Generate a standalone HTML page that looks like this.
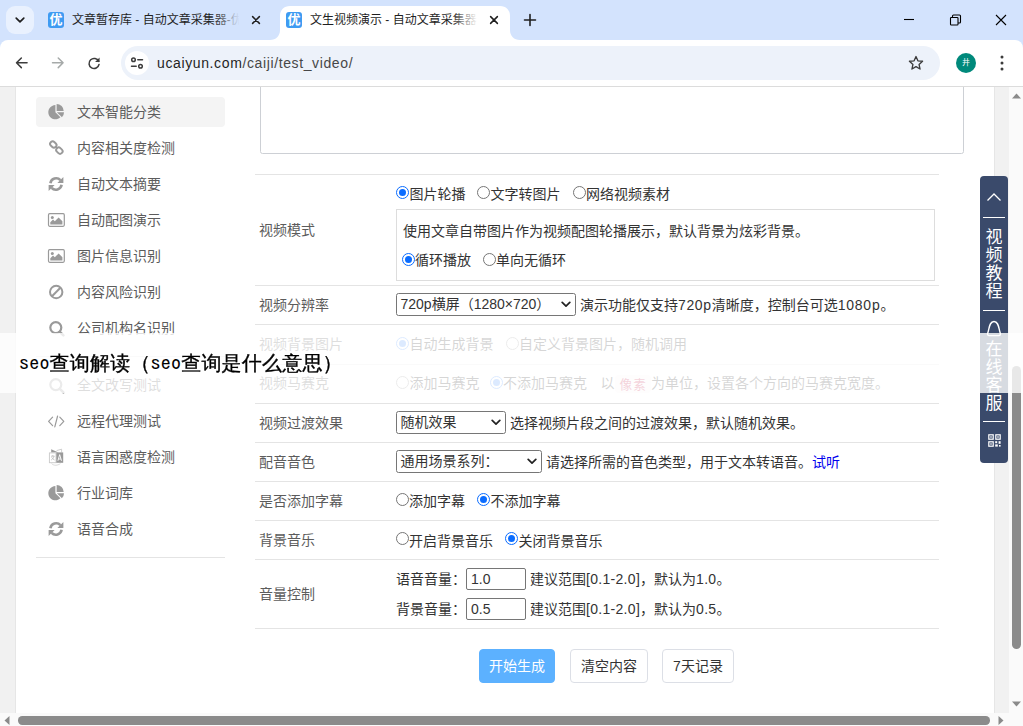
<!DOCTYPE html>
<html lang="zh-CN">
<head>
<meta charset="utf-8">
<title>文生视频演示 - 自动文章采集器</title>
<style>
*{box-sizing:border-box}
html,body{margin:0;padding:0}
body{width:1023px;height:726px;overflow:hidden;position:relative;background:#fff;font-family:"Liberation Sans","Noto Sans CJK SC",sans-serif;font-size:14px;color:#333}
.abs{position:absolute}
/* ---------- browser chrome ---------- */
#tabstrip{position:absolute;left:0;top:0;width:1023px;height:52px;background:#d3e3fd}
#toolbar{position:absolute;left:0;top:40px;width:1023px;height:46px;background:#fff;border-radius:8px 8px 0 0}
#tbline{position:absolute;left:0;top:86px;width:1023px;height:1px;background:#dcdcdc}
.tabtitle{position:absolute;top:11px;height:18px;line-height:18px;font-size:12px;color:#1f1f1f;white-space:nowrap;overflow:hidden}
.fav{position:absolute;top:12px;width:16px;height:16px;border-radius:3px;background:#3f9bf2;color:#fff;font-size:13px;line-height:16px;text-align:center;font-weight:bold;overflow:hidden}
#urlpill{position:absolute;left:121px;top:46px;width:819px;height:34px;border-radius:17px;background:#edf2fa}
#urltext{position:absolute;left:157px;top:52px;height:22px;line-height:22px;font-size:14px;color:#1f1f1f;white-space:nowrap;letter-spacing:.62px}
#urltext span{color:#474747}
/* ---------- page ---------- */
#page{position:absolute;left:0;top:87px;width:1009px;height:626px;background:#f1f1f1;overflow:hidden}
#card{position:absolute;left:15px;top:0;width:980px;height:626px;background:#fff;border-left:1px solid #e6e6e6;border-right:1px solid #e6e6e6}
.mi{position:absolute;left:36px;width:189px;height:30px;border-radius:4px;color:#5c5c5c;font-size:14px;line-height:30px}
.mi.act{background:#f4f4f4}
.mi b{position:absolute;left:41px;top:0;font-weight:normal;white-space:nowrap}
.mi svg{position:absolute;left:11px;top:6px;width:18px;height:18px;overflow:visible}
.hr{position:absolute;height:1px;background:#e4e4e4}
.lab{position:absolute;left:259px;height:20px;line-height:20px;color:#5c5c5c;white-space:nowrap}
.txt{position:absolute;height:20px;line-height:20px;color:#333;white-space:nowrap}
.rd{position:absolute;width:13px;height:13px;border-radius:50%;border:1px solid #767676;background:#fff}
.rd.on{border:1px solid #0a6cff}
.rd.on:after{content:"";position:absolute;left:2px;top:2px;width:7px;height:7px;border-radius:50%;background:#0a6cff}
.sel{position:absolute;height:23px;border:1px solid #767676;border-radius:2.5px;background:#fff;line-height:21px;padding-left:3.5px;color:#333;white-space:nowrap}
.sel svg{position:absolute;right:4px;top:6.5px;width:10px;height:7px}
.inp{position:absolute;width:60px;height:22px;border:1px solid #767676;border-radius:2px;background:#fff;line-height:20px;padding-left:4px;color:#333}
.btn{position:absolute;top:562px;height:34px;border:1px solid #dcdfe6;border-radius:4px;background:#fff;color:#333;line-height:32px;text-align:center;white-space:nowrap}
/* ---------- float bar ---------- */
#fbar{position:absolute;left:980px;top:176px;width:28px;height:287px;border-radius:4px;background:#3a4a6b;color:#fff}
#fbar .ln{position:absolute;left:3px;width:22px;height:1px;background:#fff}
#fbar .vt{position:absolute;left:0;width:28px;text-align:center;font-size:17px;line-height:18px}
/* ---------- scrollbars ---------- */
#vsb{position:absolute;left:1009px;top:87px;width:14px;height:626px;background:#fafafa}
#hsb{position:absolute;left:0;top:713px;width:1023px;height:13px;background:#fafafa}
/* ---------- overlay ---------- */
#ov{position:absolute;left:0;top:333px;width:1023px;height:60px;background:rgba(255,255,255,.8)}
#ovt{position:absolute;left:19px;top:346.5px;letter-spacing:.2px;height:30px;line-height:30px;font-size:20px;color:#000;white-space:nowrap;font-family:"Liberation Mono","WenQuanYi Zen Hei","Noto Sans CJK SC",sans-serif;-webkit-text-stroke:.35px #000}
#ovt i{font-style:normal;-webkit-text-stroke:.1px #000;font-family:"IPAGothic","Liberation Mono",monospace}
</style>
</head>
<body>
<!-- CHROME -->
<div id="tabstrip">
  <div class="abs" style="left:6px;top:6px;width:28px;height:28px;border-radius:9px;background:#e9f1fe"></div>
  <svg class="abs" style="left:13px;top:13px" width="14" height="14" viewBox="0 0 14 14"><path d="M3.2 5.2 L7 8.8 L10.8 5.2" fill="none" stroke="#1f1f1f" stroke-width="1.7" stroke-linecap="round" stroke-linejoin="round"/></svg>
  <!-- inactive tab -->
  <div class="fav" style="left:48px">优</div>
  <div class="tabtitle" style="left:72px;width:170px">文章暂存库 - 自动文章采集器-优采云</div>
  <div class="abs" style="left:214px;top:8px;width:30px;height:24px;background:linear-gradient(90deg,rgba(211,227,253,0),#d3e3fd 85%)"></div>
  <svg class="abs" style="left:250px;top:14px" width="12" height="12" viewBox="0 0 12 12"><path d="M2.6 2.6 L9.4 9.4 M9.4 2.6 L2.6 9.4" stroke="#1f1f1f" stroke-width="1.5" stroke-linecap="round"/></svg>
  <!-- active tab -->
  <svg class="abs" style="left:270px;top:6px" width="250" height="34" viewBox="0 0 250 34"><path d="M0 34 C6 34 10 30 10 24 L10 10 C10 4 14 0 20 0 L230 0 C236 0 240 4 240 10 L240 24 C240 30 244 34 250 34 Z" fill="#fff"/></svg>
  <div class="fav" style="left:286px">优</div>
  <div class="tabtitle" style="left:310px;width:170px">文生视频演示 - 自动文章采集器-优采云</div>
  <div class="abs" style="left:452px;top:8px;width:30px;height:24px;background:linear-gradient(90deg,rgba(255,255,255,0),#fff 85%)"></div>
  <svg class="abs" style="left:488px;top:14px" width="12" height="12" viewBox="0 0 12 12"><path d="M2.6 2.6 L9.4 9.4 M9.4 2.6 L2.6 9.4" stroke="#1f1f1f" stroke-width="1.5" stroke-linecap="round"/></svg>
  <!-- new tab -->
  <svg class="abs" style="left:523px;top:13px" width="14" height="14" viewBox="0 0 14 14"><path d="M7 1.5 V12.5 M1.5 7 H12.5" stroke="#1f1f1f" stroke-width="1.6" stroke-linecap="round"/></svg>
  <!-- window controls -->
  <svg class="abs" style="left:899px;top:10px" width="110" height="20" viewBox="0 0 110 20"><g fill="none" stroke="#000" stroke-width="1.1"><path d="M5 9.5 H15"/><rect x="51.5" y="7.5" width="7.5" height="7.5" rx=".8"/><path d="M53.5 7.5 V6 Q53.5 5 54.5 5 H60.5 Q61.5 5 61.5 6 V12 Q61.5 13 60.5 13 H59"/><path d="M97 5 L107 15 M107 5 L97 15"/></g></svg>
</div>
<div id="toolbar">
  <!-- back / forward / reload -->
  <svg class="abs" style="left:13.2px;top:14.2px" width="17.6" height="17.6" viewBox="0 0 20 20"><path d="M16 10 H4.5 M9.5 4.5 L4 10 L9.5 15.5" fill="none" stroke="#3c3c3c" stroke-width="1.7" stroke-linecap="round" stroke-linejoin="round"/></svg>
  <svg class="abs" style="left:49.2px;top:14.2px" width="17.6" height="17.6" viewBox="0 0 20 20"><path d="M4 10 H15.5 M10.5 4.5 L16 10 L10.5 15.5" fill="none" stroke="#a6aaa9" stroke-width="1.7" stroke-linecap="round" stroke-linejoin="round"/></svg>
  <svg class="abs" style="left:85.2px;top:13.8px" width="18" height="18" viewBox="0 0 20 20"><path d="M15.2 8.2 A5.6 5.6 0 1 0 15.6 11.6" fill="none" stroke="#3c3c3c" stroke-width="1.7" stroke-linecap="round"/><path d="M16.2 4 V9 H11.2 Z" fill="#3c3c3c"/></svg>
  <div id="urlpill" style="top:6px"></div>
  <div class="abs" style="left:125px;top:10.5px;width:24px;height:24px;border-radius:12px;background:#fff"></div>
  <svg class="abs" style="left:129.3px;top:14.7px" width="16" height="16" viewBox="0 0 16 16"><g fill="none" stroke="#3c3c3c" stroke-width="1.5" stroke-linecap="round"><circle cx="4.5" cy="4.7" r="1.8"/><path d="M8.8 4.7 H13.5"/><circle cx="11.5" cy="11.3" r="1.8"/><path d="M2.5 11.3 H7.2"/></g></svg>
  <div id="urltext" style="top:12px">ucaiyun.com<span>/caiji/test_video/</span></div>
  <!-- star -->
  <svg class="abs" style="left:907px;top:14px" width="18" height="18" viewBox="0 0 20 20"><path d="M10 2.8 L12.1 7.6 L17.3 8.1 L13.4 11.6 L14.5 16.7 L10 14 L5.5 16.7 L6.6 11.6 L2.7 8.1 L7.9 7.6 Z" fill="none" stroke="#3c3c3c" stroke-width="1.5" stroke-linejoin="round"/></svg>
  <!-- avatar -->
  <div class="abs" style="left:956px;top:13px;width:20px;height:20px;border-radius:10px;background:#00897b;color:#fff;font-size:8px;line-height:20px;text-align:center">井</div>
  <!-- menu -->
  <svg class="abs" style="left:996px;top:13px" width="12" height="20" viewBox="0 0 12 20"><circle cx="6" cy="4" r="1.5" fill="#3c3c3c"/><circle cx="6" cy="10" r="1.5" fill="#3c3c3c"/><circle cx="6" cy="16" r="1.5" fill="#3c3c3c"/></svg>
</div>
<div id="tbline"></div>
<!-- PAGE -->
<div id="page"><div id="card"></div>
<!-- sidebar menu -->
<div class="mi act" style="top:10px"><svg viewBox="0 0.6 18 18"><path d="M8.4 9.8 V2.7 A7.1 7.1 0 1 0 13.42 14.82 Z" fill="#9a9a9a"/><path d="M9.6 8.6 V1.5 A7.1 7.1 0 0 1 16.7 8.6 Z" fill="#9a9a9a"/><path d="M9.9 9.9 H17 A7.1 7.1 0 0 1 14.92 14.92 Z" fill="#9a9a9a"/></svg><b>文本智能分类</b></div>
<div class="mi" style="top:46px"><svg viewBox="0 0 18 18"><g fill="none" stroke="#9a9a9a" stroke-width="1.9"><rect x="-3.4" y="-2.5" width="6.8" height="5" rx="2.3" transform="translate(6.3 5.5) rotate(45)"/><rect x="-3.4" y="-2.5" width="6.8" height="5" rx="2.3" transform="translate(12.4 11.6) rotate(45)"/><path d="M8.3 7.5 L10.4 9.6" stroke-width="1.6"/></g></svg><b>内容相关度检测</b></div>
<div class="mi" style="top:82px"><svg viewBox="0 0 18 18"><g fill="none" stroke="#9a9a9a" stroke-width="2.6"><path d="M3.4 8.2 A5.8 5.8 0 0 1 13.4 5.2"/><path d="M14.6 9.8 A5.8 5.8 0 0 1 4.6 12.8"/></g><path d="M16.4 2 V8 H10.4 Z" fill="#9a9a9a"/><path d="M1.6 16 V10 H7.6 Z" fill="#9a9a9a"/></svg><b>自动文本摘要</b></div>
<div class="mi" style="top:118px"><svg viewBox="0 0 18 18"><rect x="1.5" y="2.7" width="15.8" height="12.6" rx="1.2" fill="none" stroke="#9a9a9a" stroke-width="1.2"/><circle cx="5.3" cy="6.4" r="1.5" fill="#9a9a9a"/><path d="M3.3 13.4 V11.2 L6 8.6 L7.8 10.3 L11.6 6.4 L15.4 10.2 V13.4 Z" fill="#9a9a9a"/></svg><b>自动配图演示</b></div>
<div class="mi" style="top:154px"><svg viewBox="0 0 18 18"><rect x="1.5" y="2.7" width="15.8" height="12.6" rx="1.2" fill="none" stroke="#9a9a9a" stroke-width="1.2"/><circle cx="5.3" cy="6.4" r="1.5" fill="#9a9a9a"/><path d="M3.3 13.4 V11.2 L6 8.6 L7.8 10.3 L11.6 6.4 L15.4 10.2 V13.4 Z" fill="#9a9a9a"/></svg><b>图片信息识别</b></div>
<div class="mi" style="top:190px"><svg viewBox="0 0 18 18"><circle cx="9.2" cy="9" r="6.2" fill="none" stroke="#9a9a9a" stroke-width="2"/><path d="M5 13.2 L13.4 4.8" stroke="#9a9a9a" stroke-width="2"/></svg><b>内容风险识别</b></div>
<div class="mi" style="top:226px"><svg viewBox="0 0 18 18"><circle cx="8.8" cy="8.6" r="5.5" fill="none" stroke="#9a9a9a" stroke-width="2.2"/><path d="M12.8 12.8 L16.4 16.4" stroke="#9a9a9a" stroke-width="2.6" stroke-linecap="round"/></svg><b>公司机构名识别</b></div>
<div class="mi" style="top:283px"><svg viewBox="0 0 18 18"><circle cx="8.8" cy="8.6" r="5.5" fill="none" stroke="#9a9a9a" stroke-width="2.2"/><path d="M12.8 12.8 L16.4 16.4" stroke="#9a9a9a" stroke-width="2.6" stroke-linecap="round"/></svg><b>全文改写测试</b></div>
<div class="mi" style="top:319px"><svg viewBox="0 0 18 18"><g fill="none" stroke="#9a9a9a" stroke-width="1.2" stroke-linecap="round" stroke-linejoin="round"><path d="M5.6 5.2 L1.6 9.4 L5.6 13.6"/><path d="M12.8 5.2 L16.8 9.4 L12.8 13.6"/><path d="M10.6 4 L7.8 14.8"/></g></svg><b>远程代理测试</b></div>
<div class="mi" style="top:355px"><svg viewBox="0 0 18 18"><path d="M4.2 1.2 L11.5 4.6 H4.2 Z" fill="#9a9a9a"/><path d="M9.6 2.6 L14.6 1.2 V4.4" fill="none" stroke="#c4c4c4" stroke-width=".8"/><rect x="2.4" y="4.9" width="6.6" height="9.8" fill="#fff" stroke="#c9c9c9" stroke-width=".9"/><path d="M4 8.2 H7.6 M5.8 7 V8.2 M4.2 12 C5.8 11 6.8 9.6 7 8.2 M4.6 9.2 C5.2 10.6 6.2 11.4 7.6 12" fill="none" stroke="#bdbdbd" stroke-width=".8"/><rect x="9.3" y="4.4" width="6.9" height="10.4" fill="#9a9a9a"/><path d="M10.9 12.8 L12.7 6.6 L14.5 12.8 M11.5 11 H13.9" fill="none" stroke="#fff" stroke-width=".9"/><path d="M4.6 15.6 C7 18 10.5 17.6 13.4 15.6" fill="none" stroke="#cfcfcf" stroke-width=".8"/></svg><b>语言困惑度检测</b></div>
<div class="mi" style="top:391px"><svg viewBox="0 0.6 18 18"><path d="M8.4 9.8 V2.7 A7.1 7.1 0 1 0 13.42 14.82 Z" fill="#9a9a9a"/><path d="M9.6 8.6 V1.5 A7.1 7.1 0 0 1 16.7 8.6 Z" fill="#9a9a9a"/><path d="M9.9 9.9 H17 A7.1 7.1 0 0 1 14.92 14.92 Z" fill="#9a9a9a"/></svg><b>行业词库</b></div>
<div class="mi" style="top:427px"><svg viewBox="0 0 18 18"><g fill="none" stroke="#9a9a9a" stroke-width="2.6"><path d="M3.4 8.2 A5.8 5.8 0 0 1 13.4 5.2"/><path d="M14.6 9.8 A5.8 5.8 0 0 1 4.6 12.8"/></g><path d="M16.4 2 V8 H10.4 Z" fill="#9a9a9a"/><path d="M1.6 16 V10 H7.6 Z" fill="#9a9a9a"/></svg><b>语音合成</b></div>
<div class="hr" style="left:36px;top:269px;width:189px"></div>
<div class="hr" style="left:36px;top:470px;width:189px"></div>
<!-- textarea -->
<div class="abs" style="left:260px;top:-10px;width:704px;height:77px;border:1px solid #cdd0d5;border-radius:2.5px;background:#fff"></div>
<!-- form rows -->
<div class="hr" style="left:255px;top:87px;width:684px"></div>
<div class="hr" style="left:255px;top:198px;width:684px"></div>
<div class="hr" style="left:255px;top:237px;width:684px"></div>
<div class="hr" style="left:255px;top:277px;width:684px"></div>
<div class="hr" style="left:255px;top:316px;width:684px"></div>
<div class="hr" style="left:255px;top:355px;width:684px"></div>
<div class="hr" style="left:255px;top:394px;width:684px"></div>
<div class="hr" style="left:255px;top:433px;width:684px"></div>
<div class="hr" style="left:255px;top:472px;width:684px"></div>
<div class="hr" style="left:255px;top:541px;width:684px"></div>
<div class="lab" style="top:133px">视频模式</div>
<div class="rd on" style="left:396.0px;top:99.0px;"></div>
<div class="txt" style="left:409.5px;top:97px;">图片轮播</div>
<div class="rd" style="left:477.0px;top:99.0px;"></div>
<div class="txt" style="left:490.5px;top:97px;">文字转图片</div>
<div class="rd" style="left:572.5px;top:99.0px;"></div>
<div class="txt" style="left:586px;top:97px;">网络视频素材</div>
<div class="abs" style="left:396px;top:122px;width:539px;height:72px;border:1px solid #ddd"></div>
<div class="txt" style="left:403px;top:133.5px;">使用文章自带图片作为视频配图轮播展示，默认背景为炫彩背景。</div>
<div class="rd on" style="left:401.5px;top:165.5px;"></div>
<div class="txt" style="left:415px;top:162.5px;">循环播放</div>
<div class="rd" style="left:482.5px;top:165.5px;"></div>
<div class="txt" style="left:496px;top:162.5px;">单向无循环</div>
<div class="lab" style="top:208px">视频分辨率</div>
<div class="sel" style="left:396px;top:206px;width:180px">720p横屏（1280×720）<svg viewBox="0 0 10 7"><path d="M1.2 1.4 L5 5.2 L8.8 1.4" fill="none" stroke="#222" stroke-width="1.7" stroke-linecap="round" stroke-linejoin="round"/></svg></div>
<div class="txt" style="left:580px;top:208px;">演示功能仅支持<span style="letter-spacing:.65px">720p</span>清晰度，控制台可选<span style="letter-spacing:.75px">1080p</span>。</div>
<div class="lab" style="top:246.5px">视频背景图片</div>
<div class="rd on" style="left:396.0px;top:249.5px;opacity:.7"></div>
<div class="txt" style="left:409.5px;top:246.5px;">自动生成背景</div>
<div class="rd" style="left:505.5px;top:249.5px;opacity:.7"></div>
<div class="txt" style="left:519px;top:246.5px;">自定义背景图片，随机调用</div>
<div class="lab" style="top:285.5px">视频马赛克</div>
<div class="rd" style="left:396.0px;top:288.5px;opacity:.7"></div>
<div class="txt" style="left:409.5px;top:285.5px;">添加马赛克</div>
<div class="rd on" style="left:489.5px;top:288.5px;opacity:.7"></div>
<div class="txt" style="left:503px;top:285.5px;">不添加马赛克</div>
<div class="txt" style="left:600.5px;top:285.5px;">以</div><div class="abs" style="left:615px;top:287.5px;width:35.5px;height:18.5px;border-radius:4px;background:#f9f2f4;color:#c7254e;font-size:12.6px;line-height:20px;text-align:center;letter-spacing:1.2px;padding-left:1px;white-space:nowrap">像素</div><div class="txt" style="left:651px;top:285.5px;">为单位，设置各个方向的马赛克宽度。</div>
<div class="lab" style="top:325.5px">视频过渡效果</div>
<div class="sel" style="left:396px;top:324px;width:110px">随机效果<svg viewBox="0 0 10 7"><path d="M1.2 1.4 L5 5.2 L8.8 1.4" fill="none" stroke="#222" stroke-width="1.7" stroke-linecap="round" stroke-linejoin="round"/></svg></div>
<div class="txt" style="left:510px;top:325.5px;">选择视频片段之间的过渡效果，默认随机效果。</div>
<div class="lab" style="top:365px">配音音色</div>
<div class="sel" style="left:396px;top:363px;width:146px">通用场景系列：<svg viewBox="0 0 10 7"><path d="M1.2 1.4 L5 5.2 L8.8 1.4" fill="none" stroke="#222" stroke-width="1.7" stroke-linecap="round" stroke-linejoin="round"/></svg></div>
<div class="txt" style="left:546px;top:365px;">请选择所需的音色类型，用于文本转语音。<span style="color:#0000ee">试听</span></div>
<div class="lab" style="top:403.5px">是否添加字幕</div>
<div class="rd" style="left:395.7px;top:406.0px;"></div>
<div class="txt" style="left:409px;top:403.5px;">添加字幕</div>
<div class="rd on" style="left:476.8px;top:406.0px;"></div>
<div class="txt" style="left:490.5px;top:403.5px;">不添加字幕</div>
<div class="lab" style="top:443px">背景音乐</div>
<div class="rd" style="left:395.7px;top:445.0px;"></div>
<div class="txt" style="left:409px;top:443.5px;">开启背景音乐</div>
<div class="rd on" style="left:504.7px;top:445.0px;"></div>
<div class="txt" style="left:518.5px;top:443.5px;">关闭背景音乐</div>
<div class="lab" style="top:496.5px">音量控制</div>
<div class="txt" style="left:396px;top:482px;">语音音量：</div>
<div class="inp" style="left:466px;top:481px">1.0</div>
<div class="txt" style="left:530px;top:482px;">建议范围<span style="letter-spacing:.3px">[0.1-2.0]</span>，默认为<span style="letter-spacing:.3px">1.0</span>。</div>
<div class="txt" style="left:396px;top:511.5px;">背景音量：</div>
<div class="inp" style="left:466px;top:511px">0.5</div>
<div class="txt" style="left:530px;top:511.5px;">建议范围<span style="letter-spacing:.3px">[0.1-2.0]</span>，默认为<span style="letter-spacing:.3px">0.5</span>。</div>
<div class="btn" style="left:479px;width:76px;background:#5cb1ff;border-color:#5cb1ff;color:#fff">开始生成</div>
<div class="btn" style="left:570px;width:78px">清空内容</div>
<div class="btn" style="left:662px;width:72px">7天记录</div>
<!-- float bar -->
<div id="fbar" style="top:89px">
<svg class="abs" style="left:6px;top:16px" width="16" height="10" viewBox="0 0 16 10"><path d="M1.5 8.5 L8 2 L14.5 8.5" fill="none" stroke="#fff" stroke-width="1.3"/></svg>
<div class="ln" style="top:41px"></div>
<div class="vt" style="top:53.3px">视<br>频<br>教<br>程</div>
<div class="ln" style="top:134px"></div>
<svg class="abs" style="left:6px;top:144px" width="16" height="18" viewBox="0 0 16 18"><path d="M3.2 15.6 C1.8 15.6 1.2 14.6 1.7 13.2 C3.4 8.4 3.2 1.5 8 1.5 C12.8 1.5 12.6 8.4 14.3 13.2 C14.8 14.6 14.2 15.6 12.8 15.6 Z" fill="none" stroke="#fff" stroke-width="1.4"/></svg>
<div class="vt" style="top:165.3px">在<br>线<br>客<br>服</div>
<div class="ln" style="top:245px"></div>
<svg class="abs" style="left:8px;top:258px" width="13" height="13" viewBox="0 0 13 13"><g fill="none" stroke="#fff" stroke-width="1.2"><rect x=".8" y=".8" width="4.4" height="4.4"/><rect x="7.8" y=".8" width="4.4" height="4.4"/><rect x=".8" y="7.8" width="4.4" height="4.4"/></g><g fill="#fff"><rect x="2.3" y="2.3" width="1.4" height="1.4"/><rect x="9.3" y="2.3" width="1.4" height="1.4"/><rect x="2.3" y="9.3" width="1.4" height="1.4"/><rect x="7.2" y="7.2" width="2" height="2"/><rect x="10.6" y="7.2" width="2" height="2.6"/><rect x="7.2" y="10.4" width="2.6" height="2.2"/><rect x="11" y="11" width="1.6" height="1.6"/></g></svg>
</div>
</div>
<!-- SCROLLBARS -->
<div id="vsb">
<svg class="abs" style="left:3px;top:6px" width="9" height="6" viewBox="0 0 9 6"><path d="M0 5.5 L4.5 0.5 L9 5.5 Z" fill="#8a8a8a"/></svg>
<div class="abs" style="left:3px;top:279px;width:9px;height:283px;border-radius:4.5px;background:#8b8b8b"></div>
<svg class="abs" style="left:3px;top:613.7px" width="9" height="6" viewBox="0 0 9 6"><path d="M0 0.5 L4.5 5.5 L9 0.5 Z" fill="#8a8a8a"/></svg>
</div>
<div id="hsb">
<svg class="abs" style="left:4.4px;top:3px" width="6" height="9" viewBox="0 0 6 9"><path d="M5.5 0 L0.5 4.5 L5.5 9 Z" fill="#8a8a8a"/></svg>
<div class="abs" style="left:18px;top:3.3px;width:972px;height:8.4px;border-radius:4.2px;background:#8b8b8b"></div>
<svg class="abs" style="left:998px;top:3px" width="6" height="9" viewBox="0 0 6 9"><path d="M0.5 0 L5.5 4.5 L0.5 9 Z" fill="#8a8a8a"/></svg>
</div>
<!-- OVERLAY -->
<div id="ov"></div>
<div id="ovt"><i>seo</i>查询解读（<i>seo</i>查询是什么意思）</div>
</body>
</html>
